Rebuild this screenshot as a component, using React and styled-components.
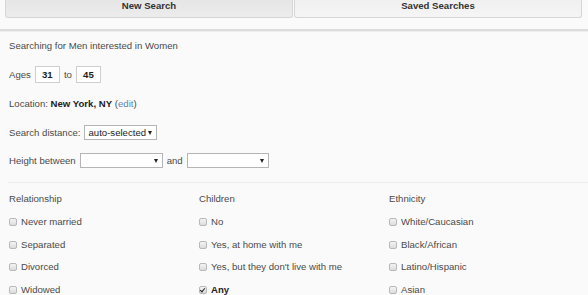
import React from "react";
import styled, { createGlobalStyle } from "styled-components";

const Global = createGlobalStyle`
  body {
    margin: 0;
    background: #fafafa;
    font-family: "Liberation Sans", Arial, sans-serif;
    font-size: 9.6px;
    color: #4a4a4a;
  }
`;

const Page = styled.div`
  width: 588px;
  height: 295px;
  overflow: hidden;
`;

const Tabs = styled.div`
  display: flex;
  gap: 1px;
  padding: 0 6px 0 5px;
`;

const Tab = styled.div`
  flex: 1;
  height: 17px;
  line-height: 11px;
  text-align: center;
  font-weight: bold;
  color: #333;
  background: ${(p) => (p.active ? "linear-gradient(#e6e6e6, #ececec)" : "linear-gradient(#f0f0f0, #f5f5f5)")};
  border: 1px solid #d6d6d6;
  border-top: none;
  border-radius: 0 0 3px 3px;
`;

const Rule = styled.div`
  margin-top: 11px;
  border-top: 2px solid #dcdcdc;
  border-bottom: 1px solid #efefef;
`;

const Form = styled.div`
  padding: 0 0 0 9px;
`;

const Line = styled.div`
  display: flex;
  align-items: center;
  gap: 4px;
  white-space: nowrap;
  line-height: 14px;
  margin-top: ${(p) => p.top}px;
  height: ${(p) => p.h || 14}px;
`;

const NumBox = styled.div`
  width: 23px;
  height: 15px;
  border: 1px solid #cfcfcf;
  background: #fff;
  font-weight: bold;
  color: #222;
  text-align: center;
  line-height: 15px;
`;

const Bold = styled.b`
  color: #222;
`;

const Link = styled.span`
  color: #5b86ad;
`;

const Select = styled.div`
  box-sizing: border-box;
  width: ${(p) => p.w}px;
  height: 15px;
  border: 1px solid #b5b5b5;
  background: #fff;
  display: flex;
  align-items: center;
  justify-content: space-between;
  padding: 0 4px 0 3px;
  color: #222;
`;

const Arrow = styled.span`
  width: 0;
  height: 0;
  border-left: 2.5px solid transparent;
  border-right: 2.5px solid transparent;
  border-top: 4px solid #222;
`;

const Divider = styled.div`
  margin: 14px 0 0 -1px;
  border-top: 1px solid #ececec;
`;

const Columns = styled.div`
  display: grid;
  grid-template-columns: 190px 190px 190px;
  margin-top: 9px;
`;

const Column = styled.div`
  display: flex;
  flex-direction: column;
`;

const Heading = styled.div`
  line-height: 14px;
  height: 14px;
  margin-bottom: 9px;
`;

const Option = styled.div`
  display: flex;
  align-items: center;
  white-space: nowrap;
  height: 14px;
  line-height: 14px;
  margin-bottom: 8.5px;
  font-weight: ${(p) => (p.checked ? "bold" : "normal")};
  color: ${(p) => (p.checked ? "#222" : "#4a4a4a")};
`;

const Box = styled.span`
  box-sizing: border-box;
  width: 8px;
  height: 8px;
  margin-right: 4px;
  border: 1px solid #b8b8b8;
  border-radius: 2px;
  background: linear-gradient(#f4f4f4, #dcdcdc);
  position: relative;
  &::after {
    content: "";
    display: ${(p) => (p.checked ? "block" : "none")};
    position: absolute;
    left: 1px;
    top: 0px;
    width: 2px;
    height: 4px;
    border: solid #222;
    border-width: 0 1.5px 1.5px 0;
    transform: rotate(40deg);
  }
`;

const groups = [
  { title: "Relationship", items: ["Never married", "Separated", "Divorced", "Widowed"] },
  { title: "Children", items: ["No", "Yes, at home with me", "Yes, but they don't live with me", "Any"], checked: 3 },
  { title: "Ethnicity", items: ["White/Caucasian", "Black/African", "Latino/Hispanic", "Asian"] },
];

export default function App() {
  return (
    <Page>
      <Global />
      <Tabs>
        <Tab active>New Search</Tab>
        <Tab>Saved Searches</Tab>
      </Tabs>
      <Rule />
      <Form>
        <Line top={7}>Searching for Men interested in Women</Line>
        <Line top={13} h={17}>
          Ages <NumBox>31</NumBox> to <NumBox>45</NumBox>
        </Line>
        <Line top={14}>
          <span>
            Location: <Bold>New York, NY</Bold> (<Link>edit</Link>)
          </span>
        </Line>
        <Line top={14} h={15}>
          Search distance: <Select w={73}>auto-selected <Arrow /></Select>
        </Line>
        <Line top={13} h={15}>
          Height between <Select w={83}><span /><Arrow /></Select> and{" "}
          <Select w={82}><span /><Arrow /></Select>
        </Line>
        <Divider />
        <Columns>
          {groups.map((g) => (
            <Column key={g.title}>
              <Heading>{g.title}</Heading>
              {g.items.map((item, i) => (
                <Option key={item} checked={g.checked === i}>
                  <Box checked={g.checked === i} />
                  {item}
                </Option>
              ))}
            </Column>
          ))}
        </Columns>
      </Form>
    </Page>
  );
}
